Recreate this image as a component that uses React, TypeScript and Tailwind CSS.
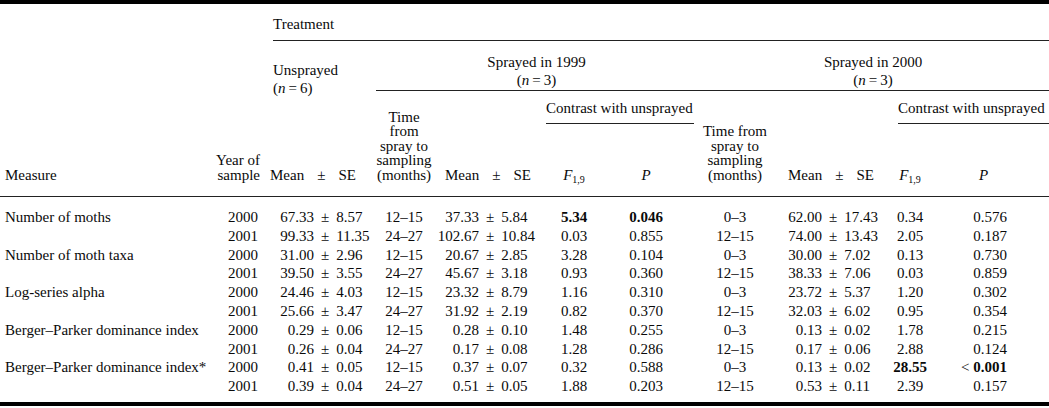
type Row = {
  measure: string
  year: string
  u: [string, string]
  t1: string
  s1: [string, string]
  f1: string
  p1: string
  t2: string
  s2: [string, string]
  f2: string
  p2: string
  bold1?: boolean
  bold2?: boolean
}

const rows: Row[] = [
  { measure: 'Number of moths', year: '2000', u: ['67.33', '8.57'], t1: '12–15', s1: ['37.33', '5.84'], f1: '5.34', p1: '0.046', t2: '0–3', s2: ['62.00', '17.43'], f2: '0.34', p2: '0.576', bold1: true },
  { measure: '', year: '2001', u: ['99.33', '11.35'], t1: '24–27', s1: ['102.67', '10.84'], f1: '0.03', p1: '0.855', t2: '12–15', s2: ['74.00', '13.43'], f2: '2.05', p2: '0.187' },
  { measure: 'Number of moth taxa', year: '2000', u: ['31.00', '2.96'], t1: '12–15', s1: ['20.67', '2.85'], f1: '3.28', p1: '0.104', t2: '0–3', s2: ['30.00', '7.02'], f2: '0.13', p2: '0.730' },
  { measure: '', year: '2001', u: ['39.50', '3.55'], t1: '24–27', s1: ['45.67', '3.18'], f1: '0.93', p1: '0.360', t2: '12–15', s2: ['38.33', '7.06'], f2: '0.03', p2: '0.859' },
  { measure: 'Log-series alpha', year: '2000', u: ['24.46', '4.03'], t1: '12–15', s1: ['23.32', '8.79'], f1: '1.16', p1: '0.310', t2: '0–3', s2: ['23.72', '5.37'], f2: '1.20', p2: '0.302' },
  { measure: '', year: '2001', u: ['25.66', '3.47'], t1: '24–27', s1: ['31.92', '2.19'], f1: '0.82', p1: '0.370', t2: '12–15', s2: ['32.03', '6.02'], f2: '0.95', p2: '0.354' },
  { measure: 'Berger–Parker dominance index', year: '2000', u: ['0.29', '0.06'], t1: '12–15', s1: ['0.28', '0.10'], f1: '1.48', p1: '0.255', t2: '0–3', s2: ['0.13', '0.02'], f2: '1.78', p2: '0.215' },
  { measure: '', year: '2001', u: ['0.26', '0.04'], t1: '24–27', s1: ['0.17', '0.08'], f1: '1.28', p1: '0.286', t2: '12–15', s2: ['0.17', '0.06'], f2: '2.88', p2: '0.124' },
  { measure: 'Berger–Parker dominance index*', year: '2000', u: ['0.41', '0.05'], t1: '12–15', s1: ['0.37', '0.07'], f1: '0.32', p1: '0.588', t2: '0–3', s2: ['0.13', '0.02'], f2: '28.55', p2: '0.001', bold2: true },
  { measure: '', year: '2001', u: ['0.39', '0.04'], t1: '24–27', s1: ['0.51', '0.05'], f1: '1.88', p1: '0.203', t2: '12–15', s2: ['0.53', '0.11'], f2: '2.39', p2: '0.157' },
]

// value ± error, lined up on the ± sign
function PlusMinus({ a, b, w }: { a: string; b: string; w: string }) {
  return (
    <div className="flex">
      <span className={`${w} text-right`}>{a}</span>
      <span className="mx-[7px]">±</span>
      <span>{b}</span>
    </div>
  )
}

const MeanSE = () => (
  <>
    Mean<span className="mx-[13px]">±</span>SE
  </>
)

const F = () => (
  <>
    <i>F</i>
    <sub className="text-[10px]">1,9</sub>
  </>
)

const N = ({ v }: { v: string }) => (
  <>
    (<i>n</i>
    <span className="mx-[3px]">=</span>
    {v})
  </>
)

export default function App() {
  const rule = 'border-b border-[#222]'
  return (
    <div className="w-[1049px] h-[408px] bg-white text-[#0a0a0a] font-['Liberation_Serif',serif] text-[15px]">
      <table className="w-[1049px] table-fixed border-separate border-spacing-0 border-t-4 border-b-4 border-black whitespace-nowrap">
        <colgroup>
          <col className="w-[212px]" />
          <col className="w-[61px]" />
          <col className="w-[103px]" />
          <col className="w-[56px]" />
          <col className="w-[114px]" />
          <col className="w-[56px]" />
          <col className="w-[95px]" />
          <col className="w-[81px]" />
          <col className="w-[102px]" />
          <col className="w-[60px]" />
          <col className="w-[109px]" />
        </colgroup>
        <thead>
          <tr>
            <td rowSpan={4} className={`align-bottom text-left pl-[5px] pb-[12px] leading-[18px] ${rule}`}>Measure</td>
            <td rowSpan={4} className={`align-bottom text-right pr-[13px] pb-[14px] leading-[14.5px] ${rule}`}>
              Year of
              <br />
              sample
            </td>
            <td colSpan={9} className={`text-left pt-[12px] pb-[7px] leading-[17px] ${rule}`}>Treatment</td>
          </tr>
          <tr>
            <td rowSpan={2} className="align-top text-left pt-[20px] leading-[18px]">
              Unsprayed
              <br />
              <N v="6" />
            </td>
            <td colSpan={4} className={`align-top text-center pt-[12px] pb-[1px] leading-[18px] ${rule}`}>
              Sprayed in 1999
              <br />
              <N v="3" />
            </td>
            <td colSpan={4} className={`align-top text-center pt-[12px] pb-[1px] leading-[18px] ${rule}`}>
              Sprayed in 2000
              <br />
              <N v="3" />
            </td>
          </tr>
          <tr>
            <td rowSpan={2} className={`align-bottom text-center pb-[14px] leading-[14.5px] ${rule}`}>
              Time
              <br />
              from
              <br />
              spray to
              <br />
              sampling
              <br />
              (months)
            </td>
            <td rowSpan={2} className={`align-bottom text-left pl-[13px] pb-[12px] leading-[18px] ${rule}`}>
              <MeanSE />
            </td>
            <td colSpan={2} className="align-bottom">
              <div className={`mr-[3px] pt-[8px] pb-[6px] leading-[18px] text-left ${rule}`}>Contrast with unsprayed</div>
            </td>
            <td rowSpan={2} className={`align-bottom text-center pr-[5px] pb-[14px] leading-[14.5px] ${rule}`}>
              Time from
              <br />
              spray to
              <br />
              sampling
              <br />
              (months)
            </td>
            <td rowSpan={2} className={`align-bottom text-left pl-[10px] pb-[12px] leading-[18px] ${rule}`}>
              <MeanSE />
            </td>
            <td colSpan={2} className="align-bottom">
              <div className={`ml-[18px] pt-[8px] pb-[6px] leading-[18px] text-left ${rule}`}>Contrast with unsprayed</div>
            </td>
          </tr>
          <tr>
            <td className={`h-[73px] align-bottom text-left pb-[12px] leading-[18px] ${rule}`}>
              <div className="-ml-[3px]">
                <MeanSE />
              </div>
            </td>
            <td className={`align-bottom text-center pb-[12px] leading-[18px] ${rule}`}>
              <F />
            </td>
            <td className={`align-bottom text-center pr-[7px] pb-[12px] leading-[18px] ${rule}`}>
              <i>P</i>
            </td>
            <td className={`align-bottom text-center pb-[12px] leading-[18px] ${rule}`}>
              <F />
            </td>
            <td className={`align-bottom text-right pr-[61px] pb-[12px] leading-[18px] ${rule}`}>
              <i>P</i>
            </td>
          </tr>
        </thead>
        <tbody className="leading-[18.8px]">
          {rows.map((r, i) => {
            const pad = i === 0 ? 'pt-[11px]' : i === rows.length - 1 ? 'pb-[6px]' : ''
            return (
              <tr key={i}>
                <td className={`text-left pl-[5px] ${pad}`}>{r.measure}</td>
                <td className={`text-right pr-[15px] ${pad}`}>{r.year}</td>
                <td className={pad}>
                  <PlusMinus a={r.u[0]} b={r.u[1]} w="w-[41px]" />
                </td>
                <td className={`text-center ${pad}`}>{r.t1}</td>
                <td className={pad}>
                  <PlusMinus a={r.s1[0]} b={r.s1[1]} w="w-[47px]" />
                </td>
                <td className={`text-center ${pad} ${r.bold1 ? 'font-bold' : ''}`}>{r.f1}</td>
                <td className={`text-center pr-[7px] ${pad} ${r.bold1 ? 'font-bold' : ''}`}>{r.p1}</td>
                <td className={`text-center pr-[5px] ${pad}`}>{r.t2}</td>
                <td className={pad}>
                  <PlusMinus a={r.s2[0]} b={r.s2[1]} w="w-[44px]" />
                </td>
                <td className={`text-center ${pad} ${r.bold2 ? 'font-bold' : ''}`}>{r.f2}</td>
                <td className={`text-right pr-[42px] ${pad}`}>
                  {r.bold2 ? (
                    <>
                      {'< '}
                      <b>{r.p2}</b>
                    </>
                  ) : (
                    r.p2
                  )}
                </td>
              </tr>
            )
          })}
        </tbody>
      </table>
    </div>
  )
}
